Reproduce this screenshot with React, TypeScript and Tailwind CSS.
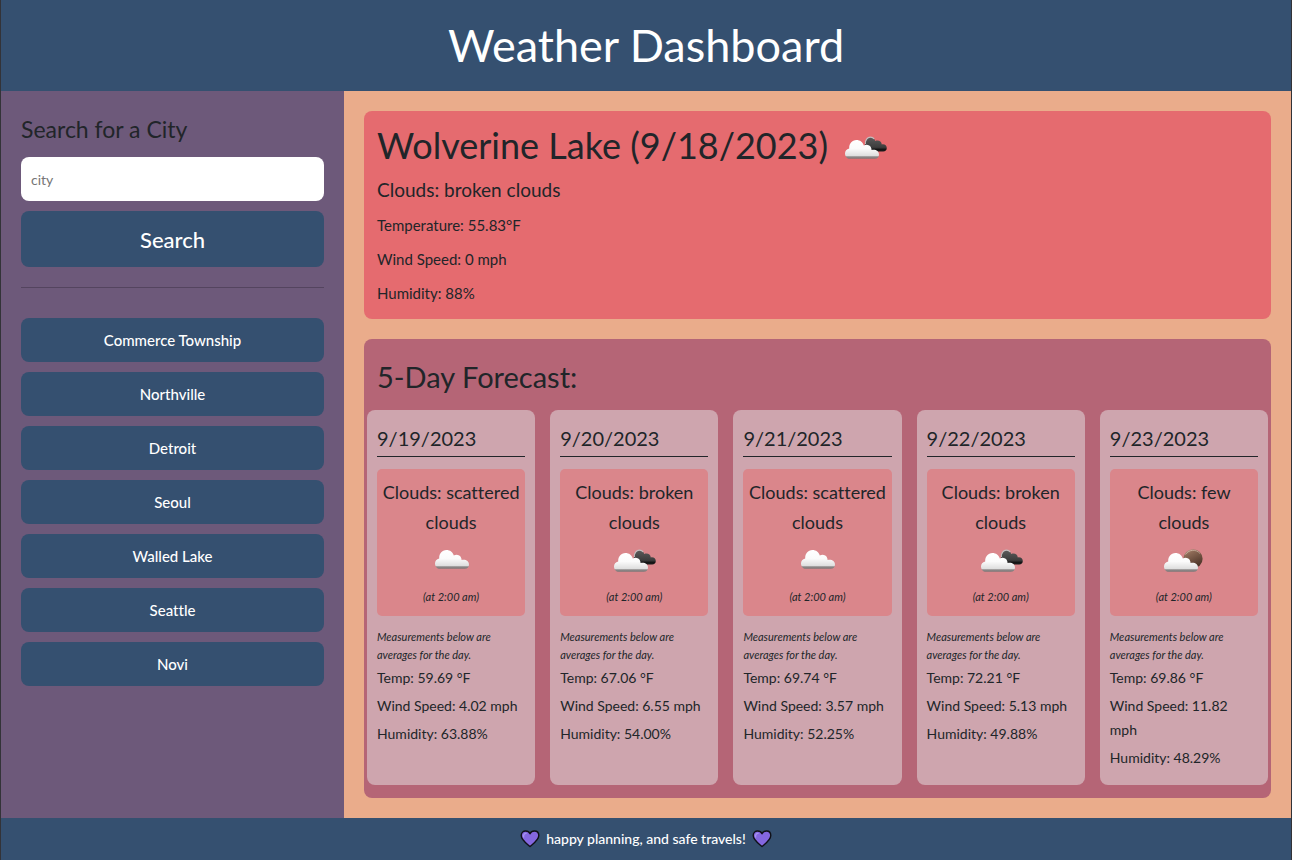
import { useState } from "react";

type Sky = "scattered" | "broken" | "few";

interface Day {
  date: string;
  sky: Sky;
  temp: string;
  wind: string;
  humidity: string;
}

const cities = [
  "Commerce Township",
  "Northville",
  "Detroit",
  "Seoul",
  "Walled Lake",
  "Seattle",
  "Novi",
];

const days: Day[] = [
  { date: "9/19/2023", sky: "scattered", temp: "59.69", wind: "4.02", humidity: "63.88" },
  { date: "9/20/2023", sky: "broken", temp: "67.06", wind: "6.55", humidity: "54.00" },
  { date: "9/21/2023", sky: "scattered", temp: "69.74", wind: "3.57", humidity: "52.25" },
  { date: "9/22/2023", sky: "broken", temp: "72.21", wind: "5.13", humidity: "49.88" },
  { date: "9/23/2023", sky: "few", temp: "69.86", wind: "11.82", humidity: "48.29" },
];

const CLOUD =
  "M5 18.8 C2 18.8 0 16.4 0 13.4 C0 10.8 1.6 9 4.2 8.4 C4 3.6 7 0 11.4 0 C15 0 17.8 2.2 18.8 5.4 C20.4 4.4 22.6 4.4 24.2 5.4 C25.8 6.4 26.6 8 26.6 10 C30.4 9 34 11 34 14.4 C34 17 32.4 18.8 29.6 18.8 Z";

function SkyIcon({ sky, id }: { sky: Sky; id: string }) {
  const light = `light-${id}`;
  const dark = `dark-${id}`;
  const moon = `moon-${id}`;
  return (
    <svg width="50" height="35" viewBox="0 0 50 35" role="img" aria-label={`${sky} clouds`} className="block shrink-0">
      <defs>
        <linearGradient id={light} x1="0" y1="0" x2="0" y2="1">
          <stop offset="0" stopColor="#ffffff" />
          <stop offset="0.45" stopColor="#fbfbfb" />
          <stop offset="0.84" stopColor="#dedede" />
          <stop offset="0.89" stopColor="#8f8b8b" />
          <stop offset="1" stopColor="#7b7676" />
        </linearGradient>
        <linearGradient id={dark} x1="0" y1="0" x2="0" y2="1">
          <stop offset="0" stopColor="#5b5b5b" />
          <stop offset="0.7" stopColor="#3c3c3c" />
          <stop offset="0.85" stopColor="#141414" />
          <stop offset="1" stopColor="#1e1e1e" />
        </linearGradient>
        <linearGradient id={moon} x1="0" y1="0" x2="0.5" y2="1">
          <stop offset="0" stopColor="#c9aa95" />
          <stop offset="0.3" stopColor="#8d6a56" />
          <stop offset="1" stopColor="#4c3428" />
        </linearGradient>
      </defs>
      {sky === "broken" && (
        <>
          <path
            d="M24 21 L25.5 14 C26 11 28 9.3 30.5 9.3 C32.8 9.3 34.4 10.7 35.2 12.9 C38.6 11.6 41.5 13.4 41.8 16.4 C44.6 15.8 46.8 17.4 46.8 20 C46.8 22 45.4 23.6 43.2 23.6 L26 23.6 Z"
            fill={`url(#${dark})`}
          />
          <path d="M25.4 16 C25 11.8 27.4 9.2 30.4 9.2 C32.2 9.2 33.4 9.8 34.2 11" fill="none" stroke="#c4bcbc" strokeWidth="1.2" />
        </>
      )}
      {sky === "few" && (
        <>
          <circle cx="34" cy="17.8" r="9.6" fill={`url(#${moon})`} />
          <path d="M26.5 13.5 A9 9 0 0 1 41 12.5" fill="none" stroke="#e0c8b5" strokeWidth="1" opacity="0.6" />
        </>
      )}
      <g transform={sky === "scattered" ? "translate(9 9)" : "translate(5 12)"}>
        <path d={CLOUD} fill={`url(#${light})`} />
      </g>
    </svg>
  );
}

function Heart() {
  return (
    <svg width="20" height="20" viewBox="0 0 20 20" aria-hidden="true" className="shrink-0">
      <path
        d="M10 17.6 C8 15.6 1.2 11.4 1.2 6.6 C1.2 3.6 3.3 2 5.6 2 C7.6 2 9.2 3 10 4.8 C10.8 3 12.4 2 14.4 2 C16.7 2 18.8 3.6 18.8 6.6 C18.8 11.4 12 15.6 10 17.6 Z"
        fill="#8467df"
        stroke="#101018"
        strokeWidth="1.4"
        strokeLinejoin="round"
      />
      <path d="M3.6 8 C3.2 5.6 4.4 4.4 6 4.4" fill="none" stroke="#a692ee" strokeWidth="1.4" strokeLinecap="round" />
    </svg>
  );
}

function ForecastCard({ day }: { day: Day }) {
  return (
    <article className="min-w-0 rounded-lg bg-[#cea5ae] p-2.5">
      <h3 className="border-b border-[#212529] pt-1 pb-1 text-xl leading-7">{day.date}</h3>
      <div className="mt-3 rounded-[5px] bg-[#da868b] pt-2 pb-2.5 text-center">
        <p className="text-lg leading-[30px]">Clouds: {day.sky} clouds</p>
        <div className="flex justify-center pt-1">
          <SkyIcon sky={day.sky} id={day.date.split("/")[1]} />
        </div>
        <p className="pt-3 text-[11px] leading-[18px] italic">(at 2:00 am)</p>
      </div>
      <p className="mt-3 text-[11px] leading-[18px] italic">Measurements below are averages for the day.</p>
      <ul className="mt-0.5 space-y-1 text-sm leading-6">
        <li>Temp: {day.temp} °F</li>
        <li>Wind Speed: {day.wind} mph</li>
        <li>Humidity: {day.humidity}%</li>
      </ul>
    </article>
  );
}

export default function App() {
  const [city, setCity] = useState("");
  return (
    <div className="flex min-h-screen flex-col border-x border-[#333338] bg-[#355070] font-['Gill_Sans','Gill_Sans_MT',Lato,sans-serif] text-[#212529] [font-variant-ligatures:no-common-ligatures]">
      <header className="py-4 text-center text-white">
        <h1 className="text-[45px] leading-[59px]">Weather Dashboard</h1>
      </header>
      <div className="flex flex-1">
        <aside className="w-[343px] shrink-0 bg-[#6d597a] p-5">
          <form onSubmit={(e) => e.preventDefault()}>
            <label htmlFor="city" className="block pt-1 pb-3.5 text-[23px] leading-7">
              Search for a City
            </label>
            <input
              id="city"
              value={city}
              onChange={(e) => setCity(e.target.value)}
              placeholder="city"
              className="block h-11 w-full rounded-lg bg-white px-2.5 text-sm placeholder:text-[#757575]"
            />
            <button type="submit" className="mt-2.5 h-14 w-full rounded-lg bg-[#355070] text-[22px] font-medium text-white">
              Search
            </button>
          </form>
          <hr className="mt-5 border-[#54445f]" />
          <div className="mt-[30px] flex flex-col gap-2.5">
            {cities.map((name) => (
              <button key={name} type="button" className="h-11 rounded-lg bg-[#355070] text-[15px] font-medium text-white">
                {name}
              </button>
            ))}
          </div>
        </aside>
        <main className="flex min-w-0 flex-1 flex-col gap-5 bg-[#eaac8b] p-5">
          <section className="rounded-lg bg-[#e56b6f] px-[13px] pt-2.5 pb-3.5">
            <div className="flex items-center gap-3">
              <h2 className="text-4xl leading-[48px]">Wolverine Lake (9/18/2023)</h2>
              <SkyIcon sky="broken" id="today" />
            </div>
            <p className="mt-1.5 text-[19px] leading-[30px]">Clouds: broken clouds</p>
            <div className="mt-2 space-y-2.5 text-[15px] leading-6">
              <p>Temperature: 55.83°F</p>
              <p>Wind Speed: 0 mph</p>
              <p>Humidity: 88%</p>
            </div>
          </section>
          <section className="flex flex-1 flex-col rounded-lg bg-[#b56576] px-[3px] pt-5 pb-[13px]">
            <h2 className="px-2.5 text-[29px] leading-9">5-Day Forecast:</h2>
            <div className="mt-[15px] grid flex-1 grid-cols-5 gap-[15px]">
              {days.map((day) => (
                <ForecastCard key={day.date} day={day} />
              ))}
            </div>
          </section>
        </main>
      </div>
      <footer className="flex h-[42px] items-center justify-center gap-1.5 text-sm font-medium text-white">
        <Heart />
        <p>happy planning, and safe travels!</p>
        <Heart />
      </footer>
    </div>
  );
}
